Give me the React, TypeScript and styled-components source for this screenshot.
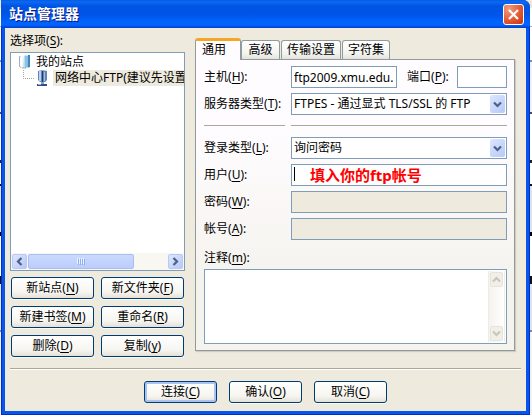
import React from "react";
import styled, { createGlobalStyle, css } from "styled-components";

const FIELD = "#7f9db9";

const Global = createGlobalStyle`
  * { box-sizing: border-box; }
  body {
    margin: 0;
    background: linear-gradient(#ece9d8 0 8px, #fff 8px 26px, #a8a8b0 26px 27px, #fff 27px 60px, #7e93a6 60px 62px, #f2f2f4 62px 112px, #4a4a58 112px 114px, #fff 114px 160px, #222 160px 163px, #fff 163px 184px, #111 184px 186px, #dfe3ea 186px 232px, #000 232px 236px, #fff 236px 276px, #111 276px 284px, #dfe6f2 284px 330px, #888 330px 332px, #f2f2f2 332px);
    font-family: "Noto Sans", "Noto Sans CJK SC", sans-serif;
    font-size: 12px;
    line-height: 16px;
    color: #000;
  }
  button, input, select, textarea { font: inherit; color: inherit; margin: 0; }
  u { text-underline-offset: 2px; text-decoration-thickness: 1px; text-decoration-skip-ink: none; }
`;

const Dialog = styled.main`
  display: flex;
  flex-direction: column;
  min-height: 100vh;
  margin: 0 2px 0 1px;
  border-radius: 0 7px 0 0;
  overflow: hidden;
  background: #0030c8;
`;

const TitleBar = styled.header`
  display: flex;
  align-items: center;
  justify-content: space-between;
  height: 28px;
  padding: 0 6px 0 8px;
  background: linear-gradient(#0a5ae0 0, #0a6af4 2px, #0054e3 6px, #0054e6 14px, #0062fc 22px, #0064ff 25px, #003dc8 28px);
`;

const Title = styled.h1`
  margin: 0;
  font-size: 14px;
  line-height: 20px;
  font-weight: 700;
  color: #fff;
  text-shadow: 1px 1px 0 #0a1883;
`;

const CloseButton = styled.button`
  display: grid;
  place-items: center;
  width: 21px;
  height: 21px;
  padding: 0;
  border: 1px solid #fff;
  border-radius: 3px;
  background: radial-gradient(circle at 25% 20%, #f09a80, #e25a33 55%, #c8320c);
`;

const Client = styled.div`
  flex: 1;
  display: flex;
  flex-direction: column;
  margin: 0 1px 1px;
  border: solid #0855ee;
  border-width: 0 3px 3px;
  padding: 5px 5px 8px;
  background: #eeeade;
`;

const Columns = styled.div`
  flex: 1;
  display: flex;
  gap: 10px;
  padding-right: 6px;
`;

const SiteColumn = styled.section`
  flex: 0 0 175px;
  min-width: 0;
  display: flex;
  flex-direction: column;
`;

const Caption = styled.div`
  margin-bottom: 3px;
`;

const TreeBox = styled.div`
  flex: 1;
  display: flex;
  flex-direction: column;
  min-height: 219px;
  border: 1px solid ${FIELD};
  background: #fff;
`;

const Tree = styled.ul`
  flex: 1;
  margin: 0;
  padding: 1px 0 0;
  list-style: none;
  overflow: hidden;
`;

const TreeItem = styled.li<{ $level: number }>`
  display: flex;
  gap: 5px;
  align-items: center;
  height: 16px;
  padding-left: ${(p) => (p.$level ? 11 : 7)}px;
  white-space: nowrap;
  svg { flex: none; }
`;

const NodeName = styled.span<{ $selected?: boolean }>`
  flex: 1;
  min-width: 0;
  overflow: hidden;
  ${(p) => p.$selected && css`
    background: #eeeade;
    padding-left: 2px;
  `}
`;

const HBar = styled.div`
  display: flex;
  height: 17px;
  padding: 1px;
  gap: 1px;
  background: #f8f7f2;
`;

const ScrollButton = styled.button<{ $off?: boolean }>`
  flex: none;
  display: grid;
  place-items: center;
  width: ${(p) => (p.$off ? 13 : 15)}px;
  height: 15px;
  padding: 0;
  border: 1px solid ${(p) => (p.$off ? "#e6e4da" : "#b9c9f3")};
  border-radius: 2px;
  color: ${(p) => (p.$off ? "#c9c7ba" : "#4d6185")};
  background: ${(p) => (p.$off ? "#f1efe8" : "linear-gradient(135deg, #dce6ff, #b6c8f8)")};
`;

const Track = styled.div`
  flex: 1;
`;

const Thumb = styled.div`
  display: grid;
  place-items: center;
  width: 76%;
  height: 15px;
  border: 1px solid #a9bdf0;
  border-radius: 2px;
  background: linear-gradient(#cbd9ff, #bccdfc);
`;

const ButtonGrid = styled.div`
  display: grid;
  grid-template-columns: 1fr 1fr;
  gap: 7px;
  padding: 6px 1px 0;
`;

const PushButton = styled.button<{ $default?: boolean }>`
  height: 22px;
  padding: 0;
  line-height: 20px;
  white-space: nowrap;
  border: 1px solid #003c74;
  border-radius: 3px;
  background: linear-gradient(#fff, #f6f5f0 70%, #e4e0d6);
  box-shadow: ${(p) => (p.$default ? "inset 0 0 0 2px #a9c4f2" : "0 1px 0 #faf9f5")};
`;

const SettingsColumn = styled.section`
  flex: 1;
  min-width: 0;
  display: flex;
  flex-direction: column;
  padding: 5px 0 6px;
`;

const TabList = styled.div`
  display: flex;
  align-items: flex-end;
  gap: 1px;
  height: 22px;
  margin-bottom: -1px;
`;

const Tab = styled.button<{ $active?: boolean }>`
  min-width: 39px;
  height: 19px;
  margin-bottom: 1px;
  padding: 0 5px;
  line-height: 16px;
  white-space: nowrap;
  border: 1px solid #919b9c;
  border-bottom: 0;
  border-radius: 3px 3px 0 0;
  background: linear-gradient(#fff, #f3f3f0 70%, #e4e2da);
  ${(p) => p.$active && css`
    height: 22px;
    margin: 0 -1px 0 0;
    padding: 0 14px 2px 6px;
    border-top: 3px solid #f5a623;
    background: #fffcff;
    z-index: 1;
  `}
`;

const Panel = styled.div`
  flex: 1;
  display: flex;
  flex-direction: column;
  padding: 6px 7px 6px 8px;
  border: 1px solid #919b9c;
  background: linear-gradient(#fffcff 0 25%, #f5f3ee 75%);
  box-shadow: 1px 1px 1px #cfccbf;
`;

const FieldRow = styled.div`
  display: grid;
  grid-template-columns: 87px minmax(0, 1fr);
  align-items: center;
  margin-bottom: 5px;
`;

const HostFields = styled.div`
  display: flex;
  align-items: center;
`;

const TextField = styled.input<{ $narrow?: boolean }>`
  flex: ${(p) => (p.$narrow ? "0 0 50px" : "1")};
  min-width: 0;
  width: 100%;
  height: 22px;
  padding: 0 0 0 2px;
  border: 1px solid ${FIELD};
  border-radius: 0;
  background: #fff;
  &:disabled { background: #eeeade; }
`;

const PortLabel = styled.label`
  width: 60px;
  padding-left: 10px;
`;

const Combo = styled.div`
  display: flex;
  align-items: center;
  height: 22px;
  padding-right: 1px;
  border: 1px solid ${FIELD};
  background: #fff;
`;

const Select = styled.select`
  flex: 1;
  min-width: 0;
  height: 20px;
  padding: 0 2px;
  border: 0;
  appearance: none;
  background: transparent;
`;

const DropMark = styled.span`
  display: grid;
  place-items: center;
  width: 15px;
  height: 18px;
  border-radius: 2px;
  color: #4d6185;
  background: linear-gradient(135deg, #dce6ff, #b6c8f8);
  pointer-events: none;
`;

const Rules = styled.div`
  display: grid;
  grid-template-columns: 81px 1fr;
  gap: 6px;
  margin: 5px 0 11px;
`;

const Rule = styled.hr`
  width: 100%;
  height: 1px;
  margin: 0;
  border: 0;
  background: #aca899;
`;

const Hinted = styled.div`
  position: relative;
  display: flex;
`;

const Caret = styled.span`
  position: absolute;
  left: 3px;
  top: 3px;
  width: 1px;
  height: 14px;
  background: #000;
`;

const Hint = styled.span`
  position: absolute;
  left: 19px;
  top: 1px;
  font-size: 15px;
  line-height: 20px;
  font-weight: 700;
  color: #f00;
  white-space: nowrap;
  pointer-events: none;
`;

const NoteLabel = styled.label`
  margin: 5px 0 3px;
`;

const NoteBox = styled.div`
  flex: 1;
  display: flex;
  min-height: 75px;
  border: 1px solid ${FIELD};
  background: #fff;
`;

const Note = styled.textarea`
  flex: 1;
  min-width: 0;
  border: 0;
  padding: 2px;
  resize: none;
  overflow: hidden;
  background: transparent;
`;

const VBar = styled.div`
  display: flex;
  flex-direction: column;
  justify-content: space-between;
  width: 17px;
  margin: 1px;
  padding: 1px;
  border: solid #eeede5;
  border-width: 0 1px;
  background: linear-gradient(90deg, #f4f3ee, #fff);
`;

const Etch = styled.hr`
  width: 100%;
  height: 2px;
  margin: 11px 0;
  border: solid;
  border-width: 1px 0;
  border-color: #aca899 transparent #fff;
`;

const Actions = styled.footer`
  display: grid;
  grid-template-columns: repeat(3, 73px);
  gap: 12px;
  justify-content: center;
`;

type Direction = "left" | "right" | "up" | "down";
const turns: Record<Direction, number> = { down: 0, left: 90, up: 180, right: 270 };

const Chevron = ({ to }: { to: Direction }) => (
  <svg width="9" height="9" viewBox="0 0 9 9" aria-hidden="true">
    <path d="M1 2.5 4.5 6 8 2.5" fill="none" stroke="currentColor" strokeWidth="2.2" transform={`rotate(${turns[to]} 4.5 4.5)`} />
  </svg>
);

const FolderIcon = () => (
  <svg width="13" height="16" viewBox="0 0 13 16" aria-hidden="true">
    <path d="M2.500 2.500H1.500v10l2 1" fill="none" stroke="#a4adb8" />
    <path d="M4 3l3-2v11l-3 2z" fill="#f2fafe" />
    <path d="M6 2l2-1v12l-3 1z" fill="#b9dff4" />
    <path d="M7 2l5-1v12l-5 1z" fill="#8cc2e6" />
    <path d="M10 1h2v12l-2 .5z" fill="#3f86bd" />
    <path d="M4 14h4" stroke="#9daec0" />
  </svg>
);

const ServerIcon = () => (
  <svg width="26" height="16" viewBox="0 0 26 16" aria-hidden="true">
    <path d="M1.5 0v8.5H12" fill="none" stroke="#aaa493" strokeDasharray="1 1" />
    <path d="M16 1q4-1.500 9 0v9q-1 2-4.500 2.500-3.500-.5-4.500-2.500z" fill="#6484b3" />
    <path d="M17 1h2v10h-2z" fill="#b8d3ef" />
    <path d="M20 1h1v11h-1z" fill="#263d6b" />
    <path d="M22 2h1v9h-1z" fill="#9fc0e6" />
    <path d="M19 12h3v2h-3z" fill="#83a5ce" />
    <path d="M15 14h10v2H15z" fill="#334e7c" />
    <path d="M16 14h3v1h-3z" fill="#9fb6d6" />
  </svg>
);

const Key = ({ text, k }: { text: string; k: string }) => (
  <>{text}(<u>{k}</u>)</>
);

const siteActions = [["新站点", "N"], ["新文件夹", "F"], ["新建书签", "M"], ["重命名", "R"], ["删除", "D"], ["复制", "y"]];
const dialogActions = [["连接", "C"], ["确认", "O"], ["取消", "C"]];

function ComboRow({ id, text, k, value }: { id: string; text: string; k: string; value: string }) {
  return (
    <FieldRow>
      <label htmlFor={id}><Key text={text} k={k} />:</label>
      <Combo>
        <Select id={id}><option>{value}</option></Select>
        <DropMark><Chevron to="down" /></DropMark>
      </Combo>
    </FieldRow>
  );
}

export default function App() {
  return (
    <>
      <Global />
      <Dialog>
        <TitleBar>
          <Title>站点管理器</Title>
          <CloseButton aria-label="关闭">
            <svg width="13" height="13" viewBox="0 0 13 13" aria-hidden="true">
              <path d="M2 2l9 9M11 2l-9 9" stroke="#fff" strokeWidth="2.2" />
            </svg>
          </CloseButton>
        </TitleBar>
        <Client>
          <Columns>
            <SiteColumn>
              <Caption><Key text="选择项" k="S" />:</Caption>
              <TreeBox>
                <Tree>
                  <TreeItem $level={0}><FolderIcon /><NodeName>我的站点</NodeName></TreeItem>
                  <TreeItem $level={1}><ServerIcon /><NodeName $selected>网络中心FTP(建议先设置</NodeName></TreeItem>
                </Tree>
                <HBar>
                  <ScrollButton aria-label="向左"><Chevron to="left" /></ScrollButton>
                  <Track>
                    <Thumb>
                      <svg width="8" height="7" viewBox="0 0 8 7" aria-hidden="true">
                        <path d="M.5 0v6M2.500 0v6M4.500 0v6M6.500 0v6" stroke="#eef4fe" />
                        <path d="M1.500 1v6M3.500 1v6M5.500 1v6M7.500 1v6" stroke="#8cb0f8" />
                      </svg>
                    </Thumb>
                  </Track>
                  <ScrollButton aria-label="向右"><Chevron to="right" /></ScrollButton>
                </HBar>
              </TreeBox>
              <ButtonGrid>
                {siteActions.map(([t, k]) => <PushButton key={t}><Key text={t} k={k} /></PushButton>)}
              </ButtonGrid>
            </SiteColumn>
            <SettingsColumn>
              <TabList role="tablist">
                <Tab role="tab" aria-selected $active>通用</Tab>
                <Tab role="tab">高级</Tab>
                <Tab role="tab">传输设置</Tab>
                <Tab role="tab">字符集</Tab>
              </TabList>
              <Panel role="tabpanel">
                <FieldRow>
                  <label htmlFor="host"><Key text="主机" k="H" />:</label>
                  <HostFields>
                    <TextField id="host" defaultValue="ftp2009.xmu.edu." />
                    <PortLabel htmlFor="port"><Key text="端口" k="P" />:</PortLabel>
                    <TextField id="port" $narrow />
                  </HostFields>
                </FieldRow>
                <ComboRow id="server" text="服务器类型" k="T" value="FTPES - 通过显式 TLS/SSL 的 FTP" />
                <Rules><Rule /><Rule /></Rules>
                <ComboRow id="login" text="登录类型" k="L" value="询问密码" />
                <FieldRow>
                  <label htmlFor="user"><Key text="用户" k="U" />:</label>
                  <Hinted>
                    <TextField id="user" />
                    <Caret />
                    <Hint>填入你的ftp帐号</Hint>
                  </Hinted>
                </FieldRow>
                <FieldRow>
                  <label htmlFor="password"><Key text="密码" k="W" />:</label>
                  <TextField id="password" type="password" disabled />
                </FieldRow>
                <FieldRow>
                  <label htmlFor="account"><Key text="帐号" k="A" />:</label>
                  <TextField id="account" disabled />
                </FieldRow>
                <NoteLabel htmlFor="note"><Key text="注释" k="m" />:</NoteLabel>
                <NoteBox>
                  <Note id="note" />
                  <VBar>
                    <ScrollButton $off aria-label="向上"><Chevron to="up" /></ScrollButton>
                    <ScrollButton $off aria-label="向下"><Chevron to="down" /></ScrollButton>
                  </VBar>
                </NoteBox>
              </Panel>
            </SettingsColumn>
          </Columns>
          <Etch />
          <Actions>
            {dialogActions.map(([t, k], i) => <PushButton key={t} $default={i === 0}><Key text={t} k={k} /></PushButton>)}
          </Actions>
        </Client>
      </Dialog>
    </>
  );
}
